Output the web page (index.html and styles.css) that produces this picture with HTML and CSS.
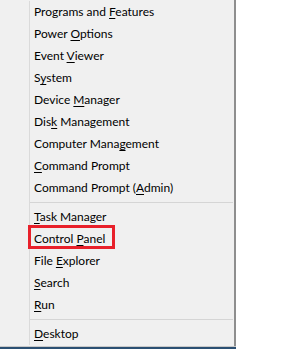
FILE: index.html
```html
<!DOCTYPE html>
<html lang="en">
<head>
    <meta charset="UTF-8">
    <meta name="viewport" content="width=device-width, initial-scale=1.0">
    <title>Quick Link Menu</title>
    <link rel="stylesheet" href="styles.css">
</head>
<body>
    <div class="menu">
        <ul class="items">
            <li>Programs and <u>F</u>eatures</li>
            <li>Power <u>O</u>ptions</li>
            <li>Event <u>V</u>iewer</li>
            <li>S<u>y</u>stem</li>
            <li>Device <u>M</u>anager</li>
            <li>Dis<u>k</u> Management</li>
            <li>Computer Mana<u>g</u>ement</li>
            <li><u>C</u>ommand Prompt</li>
            <li>Command Prompt (<u>A</u>dmin)</li>
            <li class="sep"></li>
            <li><u>T</u>ask Manager</li>
            <li class="marked">Control <u>P</u>anel</li>
            <li>File <u>E</u>xplorer</li>
            <li><u>S</u>earch</li>
            <li><u>R</u>un</li>
            <li class="sep"></li>
            <li><u>D</u>esktop</li>
        </ul>
    </div>
    <div class="taskbar"></div>
</body>
</html>
```

FILE: styles.css
```css
body {
    margin: 0;
    background: #fff;
    font-family: Lato, "Open Sans", sans-serif;
    font-size: 12px;
    color: #000;
}
.menu {
    width: 236px;
    height: 346px;
    box-sizing: border-box;
    padding: 1px 0 0 29px;
    background: #f0f0f0;
    border-right: 2px solid #8e8e8e;
}
.items {
    list-style: none;
    margin: 0 1px 0 0;
    padding: 0;
    height: 344px;
    border-left: 1px solid #dadada;
}
.items li {
    height: 22px;
    line-height: 22px;
    padding-left: 4px;
    white-space: nowrap;
    position: relative;
}
.items u {
    text-underline-offset: 2px;
}
.items .sep {
    height: 7px;
    box-sizing: border-box;
    padding: 3px 0 0;
}
.items .sep::after {
    content: "";
    display: block;
    height: 1px;
    background: #d5d5d5;
}
.marked::before {
    content: "";
    position: absolute;
    left: -2px;
    top: -3px;
    width: 87px;
    height: 24px;
    box-sizing: border-box;
    border: 3px solid #e8202a;
}
.taskbar {
    width: 236px;
    height: 3px;
    background: #2b4f72;
    border-top: 1px solid #c8c8c8;
    box-sizing: border-box;
}
```
